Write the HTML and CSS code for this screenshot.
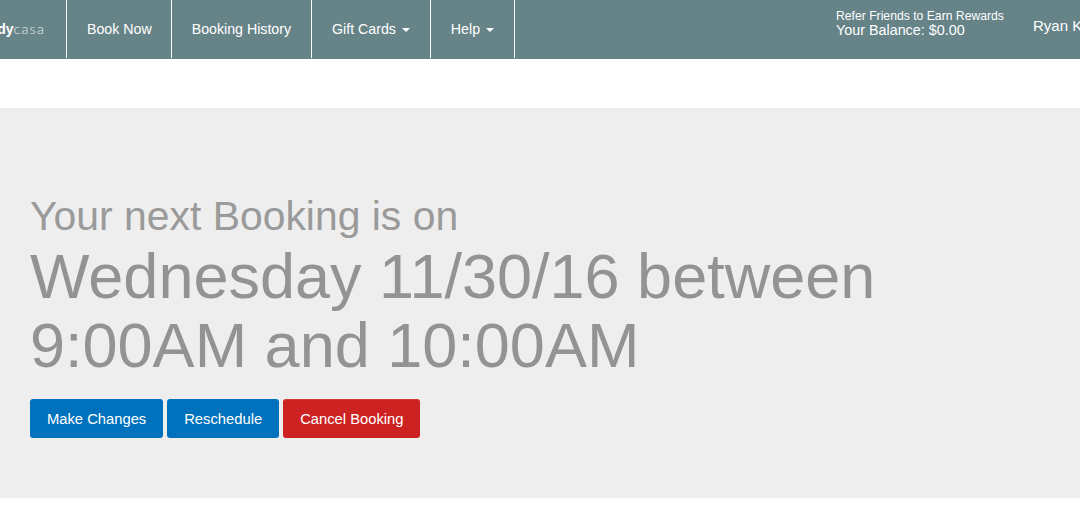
FILE: index.html
```html
<!DOCTYPE html>
<html lang="en">
<head>
<meta charset="utf-8">
<title>Booking</title>
<link rel="stylesheet" href="styles.css">
</head>
<body>
<nav class="navbar">
  <div class="brand"><b>dy</b><span class="brand-light">casa</span></div>
  <ul class="nav">
    <li><a href="#">Book Now</a></li>
    <li><a href="#">Booking History</a></li>
    <li><a href="#">Gift Cards <span class="caret"></span></a></li>
    <li><a href="#">Help <span class="caret"></span></a></li>
  </ul>
  <div class="balance">
    <div class="refer">Refer Friends to Earn Rewards</div>
    <div class="amount">Your Balance: $0.00</div>
  </div>
  <div class="user">Ryan K</div>
</nav>
<section class="hero">
  <h2 class="lead">Your next Booking is on</h2>
  <h1 class="when">Wednesday 11/30/16 between<br>9:00AM and 10:00AM</h1>
  <div class="actions">
    <a class="btn blue" href="#">Make Changes</a>
    <a class="btn blue" href="#">Reschedule</a>
    <a class="btn red" href="#">Cancel Booking</a>
  </div>
</section>
</body>
</html>
```
FILE: styles.css
```css
* { box-sizing: border-box; }
html, body { margin: 0; height: 517px; overflow: hidden; background: #fff; }
body { font-family: "Liberation Sans", Arial, sans-serif; color: #fff; }
a { color: inherit; text-decoration: none; }

.navbar { display: flex; height: 59px; background: #668388; overflow: hidden; white-space: nowrap; }
.brand { width: 66px; flex: none; display: flex; justify-content: flex-end; padding: 20px 21px 0 0; font-size: 14px; line-height: 18px; color: #fff; }
.brand b { font-weight: 700; }
.brand-light { font-family: "Lato", "Liberation Sans", sans-serif; font-weight: 300; font-size: 14.5px; letter-spacing: 1.1px; color: #e8eeee; }
.nav { display: flex; flex: none; list-style: none; margin: 0; padding: 0; height: 58px; border-left: 1px solid #fff; }
.nav li { flex: none; border-right: 1px solid #fff; }
.nav a { display: block; padding: 19px 20px 0; font-size: 14.2px; line-height: 20px; }
.nav li:first-child a { padding-right: 19px; }
.caret { display: inline-block; width: 0; height: 0; margin-left: 2px; vertical-align: middle; border-top: 4px solid #fff; border-left: 4px solid transparent; border-right: 4px solid transparent; }
.balance { margin-left: 321px; padding-top: 9px; flex: none; }
.refer { font-size: 12.2px; line-height: 14px; }
.amount { font-size: 14.35px; line-height: 15px; }
.user { margin-left: 29px; padding-top: 17px; font-size: 15px; line-height: 18px; flex: none; }

.hero { margin-top: 49px; height: 390px; background: #eee; padding: 85px 30px 0; color: #939393; }
.lead { margin: 0; font-size: 40.9px; line-height: 46px; font-weight: 400; color: #9a9a9a; }
.when { margin: 3px 0 0; font-size: 63px; line-height: 69px; font-weight: 400; }
.actions { display: flex; gap: 4px; margin-top: 19px; }
.btn { display: block; height: 39px; padding: 0 17px; font-size: 14.75px; line-height: 40px; color: #fff; border-radius: 3px; }
.blue { background: #0071bc; }
.red { background: #cc2222; border-top: 1px solid #d23a3a; line-height: 38px; }
```
